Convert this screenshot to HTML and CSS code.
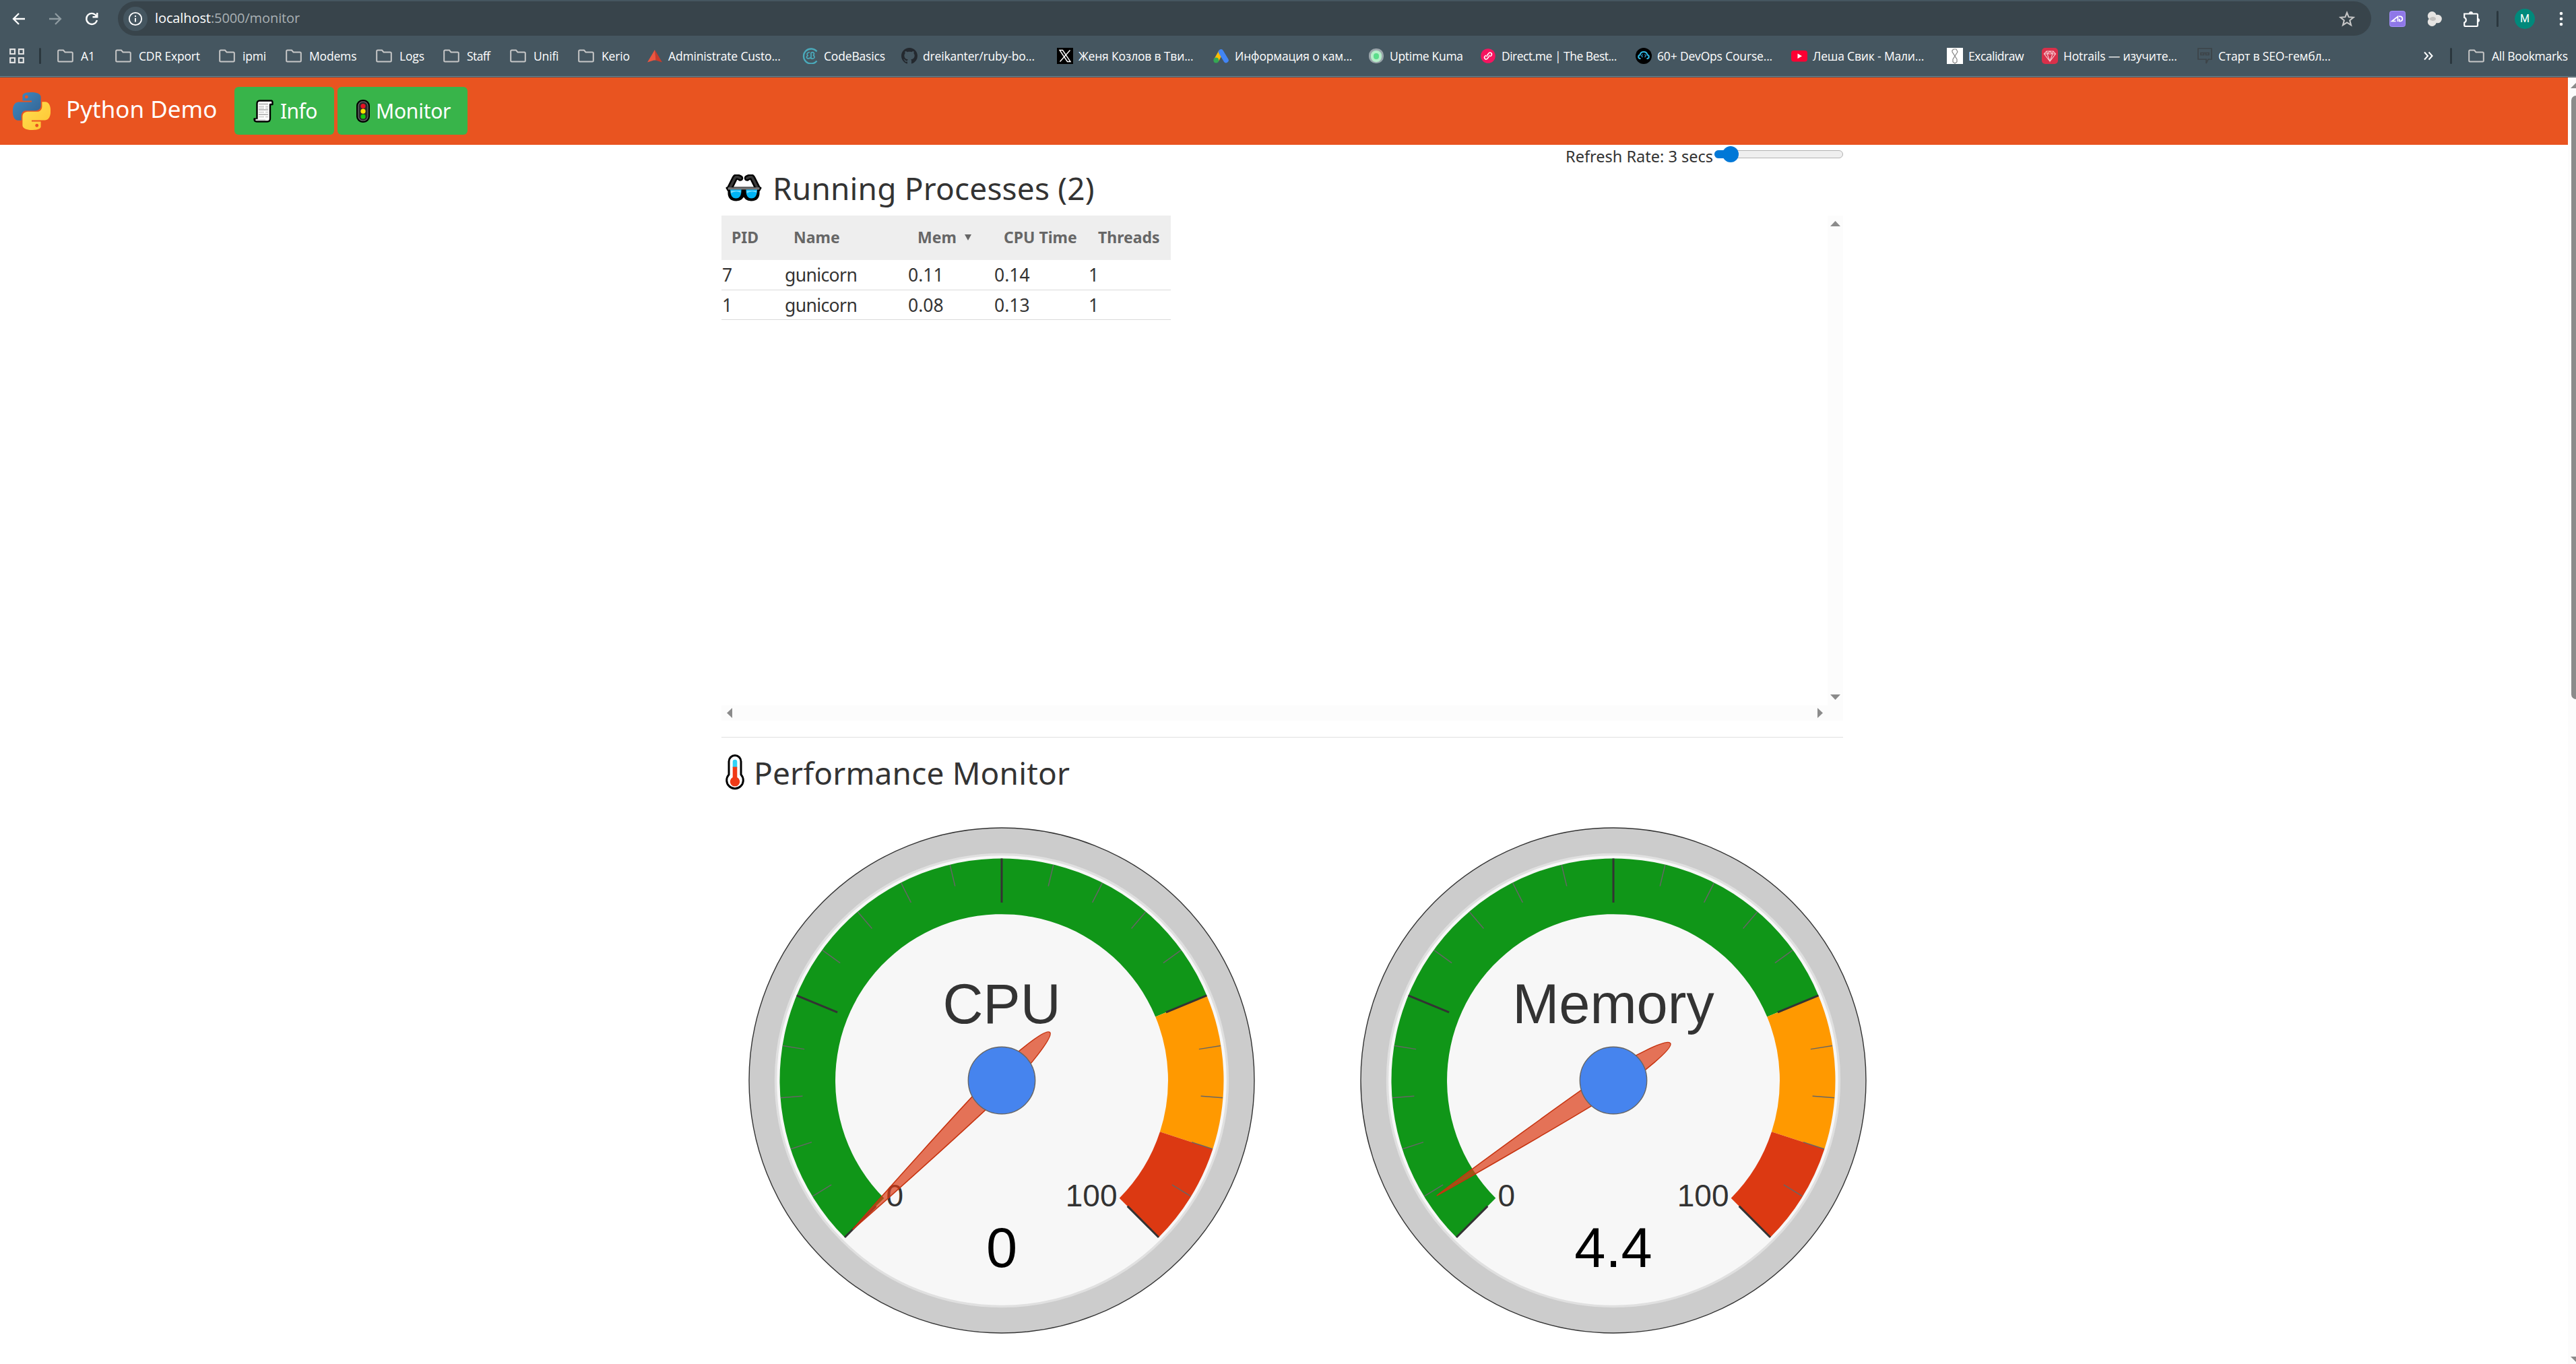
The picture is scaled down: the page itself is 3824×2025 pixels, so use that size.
FILE: index.html
```html
<!DOCTYPE html>
<html lang="en">
<head>
<meta charset="utf-8">
<title>Python Demo</title>
<link rel="stylesheet" href="styles.css">
</head>
<body>
<svg class="defs" aria-hidden="true">
  <defs>
    <symbol id="folder" viewBox="0 0 24 24"><path d="M1.2 5V19a1.5 1.5 0 0 0 1.5 1.5H21.3a1.5 1.5 0 0 0 1.5-1.5V8a1.5 1.5 0 0 0-1.5-1.5H11.5L9 3.5H2.7A1.5 1.5 0 0 0 1.2 5z" fill="none" stroke="#c7c7c7" stroke-width="2"/></symbol>
    <path id="py" d="M14.25.18l.9.2.73.26.59.3.45.32.34.34.25.34.16.33.1.3.04.26.02.2-.01.13V8.5l-.05.63-.13.55-.21.46-.26.38-.3.31-.33.25-.35.19-.35.14-.33.1-.3.07-.26.04-.21.02H8.77l-.69.05-.59.14-.5.22-.41.27-.33.32-.27.35-.2.36-.15.37-.1.35-.07.32-.04.27-.02.21v3.06H3.17l-.21-.03-.28-.07-.32-.12-.35-.18-.36-.26-.36-.36-.35-.46-.32-.59-.28-.73-.21-.88-.14-1.05-.05-1.23.06-1.22.16-1.04.24-.87.32-.71.36-.57.4-.44.42-.33.42-.24.4-.16.36-.1.32-.05.24-.01h.16l.06.01h8.16v-.83H6.18l-.01-2.75-.02-.37.05-.34.11-.31.17-.28.25-.26.31-.23.38-.2.44-.18.51-.15.58-.12.64-.1.71-.06.77-.04.84-.02 1.27.05zm-6.3 1.98l-.23.33-.08.41.08.41.23.34.33.22.41.09.41-.09.33-.22.23-.34.08-.41-.08-.41-.23-.33-.33-.22-.41-.09-.41.09z"/>
    <linearGradient id="blue" x1="0" y1="0" x2="1" y2="1"><stop offset="0" stop-color="#3f8cc6"/><stop offset="1" stop-color="#345f8c"/></linearGradient>
    <linearGradient id="yellow" x1="1" y1="1" x2="0" y2="0"><stop offset="0" stop-color="#ffe052"/><stop offset="1" stop-color="#ffc331"/></linearGradient>
    <g id="dial">
      <circle r="375" fill="#ccc" stroke="#333" stroke-width="1.4"/>
      <circle r="335.5" fill="#f7f7f7" stroke="#e0e0e0" stroke-width="3.4"/>
      <path fill="#109618" d="M-233 233A329.5 329.5 0 1 1 304.4-126.1L228.2-94.5A247 247 0 1 0-174.7 174.7z"/>
      <path fill="#ff9900" d="M304.4-126.1A329.5 329.5 0 0 1 313.4 101.8L234.9 76.3A247 247 0 0 0 228.2-94.5z"/>
      <path fill="#dc3912" d="M313.4 101.8A329.5 329.5 0 0 1 233 233L174.7 174.7A247 247 0 0 0 234.9 76.3z"/>
      <g stroke="#666" stroke-width="1.5">
        <path id="t4" d="M0 0M296.5 0H329" transform="rotate(148.5)"/>
        <path d="M296.5 0H329" transform="rotate(162)"/>
        <path d="M296.5 0H329" transform="rotate(175.5)"/>
        <path d="M296.5 0H329" transform="rotate(189)"/>
        <path d="M296.5 0H329" transform="rotate(216)"/>
        <path d="M296.5 0H329" transform="rotate(229.5)"/>
        <path d="M296.5 0H329" transform="rotate(243)"/>
        <path d="M296.5 0H329" transform="rotate(256.5)"/>
        <path d="M296.5 0H329" transform="rotate(283.5)"/>
        <path d="M296.5 0H329" transform="rotate(297)"/>
        <path d="M296.5 0H329" transform="rotate(310.5)"/>
        <path d="M296.5 0H329" transform="rotate(324)"/>
        <path d="M296.5 0H329" transform="rotate(351)"/>
        <path d="M296.5 0H329" transform="rotate(4.5)"/>
        <path d="M296.5 0H329" transform="rotate(18)"/>
        <path d="M296.5 0H329" transform="rotate(31.5)"/>
      </g>
      <g stroke="#333" stroke-width="3">
        <path d="M264 0H329.5" transform="rotate(135)"/>
        <path d="M264 0H329.5" transform="rotate(202.5)"/>
        <path d="M264 0H329.5" transform="rotate(270)"/>
        <path d="M264 0H329.5" transform="rotate(337.5)"/>
        <path d="M264 0H329.5" transform="rotate(45)"/>
      </g>
    </g>
    <path id="needle" d="M-313 0C-260-4-60-15 0-15C40-15 101-9 101 0C101 9 40 15 0 15C-60 15-260 4-313 0z" fill="#dc3912" fill-opacity=".7" stroke="#c63310" stroke-width="1.5"/>
    <circle id="hub" r="49.7" fill="#4684ee" stroke="#666" stroke-width="1.4"/>
  </defs>
</svg>

<header class="browser">
  <div class="toolbar">
    <svg class="ic back" viewBox="0 0 24 24"><path d="M21 12H4.500M12 4L4 12L12 20" fill="none" stroke="#fff" stroke-width="2.3"/></svg>
    <svg class="ic forward" viewBox="0 0 24 24"><path d="M3 12H19.500M12 4L20 12L12 20" fill="none" stroke="#8f9ba1" stroke-width="2.3"/></svg>
    <svg class="ic reload" viewBox="0 0 24 24"><path d="M19.500 8.500A8 8 0 1 0 20 14M20.300 3V9.300H13.500" fill="none" stroke="#fff" stroke-width="2.4"/></svg>
    <div class="address">
      <span class="info-dot"><svg viewBox="0 0 24 24"><circle cx="12" cy="12" r="10" fill="none" stroke="#fff" stroke-width="2"/><path d="M12 10.500V17M12 6.500V8.800" stroke="#fff" stroke-width="2.100"/></svg></span>
      <span class="url"><b>localhost</b>:5000/monitor</span>
      <svg class="ic star" viewBox="0 0 24 24"><path d="M12 2.800L14.600 9.300L21.600 9.800L16.200 14.300L18 21.200L12 17.400L6 21.200L7.800 14.300L2.400 9.800L9.400 9.300z" fill="none" stroke="#c7c7c7" stroke-width="2.100"/></svg>
    </div>
    <svg class="ic ad" viewBox="0 0 24 24"><rect x=".5" y=".5" width="23" height="23" rx="3" fill="#8f78e8" stroke="#a58fff"/><path d="M12.500 16V8.500L3.800 15.500H9.500M14 8.300H16.500A3.700 3.700 0 0 1 16.500 15.500H14.800V12" fill="none" stroke="#fff" stroke-width="1.700"/></svg>
    <svg class="ic blobs" viewBox="0 0 24 24"><g fill="#e6e4e2"><circle cx="8.300" cy="7.500" r="6.500"/><circle cx="8.300" cy="16.500" r="6.500"/><circle cx="16.500" cy="12" r="6.300"/></g><path d="M4 12a6.500 6.500 0 0 1 9-2q2 2 0 4a6.500 6.500 0 0 1-9-2z" fill="#c3c1bf"/></svg>
    <svg class="ic puzzle" viewBox="0 0 24 24"><path d="M1.200 4.500H19.500a1.500 1.500 0 0 1 1.500 1.500V21.500a1.500 1.500 0 0 1-1.500 1.500H2.700a1.500 1.500 0 0 1-1.500-1.500V17.500a4 4 0 0 0 0-7.500z" fill="none" stroke="#fff" stroke-width="2.200"/><path d="M8 4a3 3 0 0 1 6 0zM21 11a3 3 0 0 1 0 6z" fill="#fff"/></svg>
    <span class="bar-sep"></span>
    <span class="avatar">M</span>
    <svg class="ic kebab" viewBox="0 0 24 24"><g fill="#fff"><circle cx="12" cy="4" r="2.300"/><circle cx="12" cy="12" r="2.300"/><circle cx="12" cy="20" r="2.300"/></g></svg>
  </div>

  <nav class="bookmarks">
    <svg class="apps" viewBox="0 0 22 22"><path d="M1.200 1.200H8V8H1.200zM14 1.200H20.800V8H14zM1.200 14H8V20.800H1.200zM14 14H20.800V20.800H14z" fill="none" stroke="#e2e2e2" stroke-width="2.200"/></svg>
    <span class="bar-sep"></span>
    <a class="bm dir"><svg><use href="#folder"/></svg>A1</a>
    <a class="bm dir"><svg><use href="#folder"/></svg>CDR Export</a>
    <a class="bm dir"><svg><use href="#folder"/></svg>ipmi</a>
    <a class="bm dir"><svg><use href="#folder"/></svg>Modems</a>
    <a class="bm dir"><svg><use href="#folder"/></svg>Logs</a>
    <a class="bm dir snug"><svg><use href="#folder"/></svg>Staff</a>
    <a class="bm dir"><svg><use href="#folder"/></svg>Unifi</a>
    <a class="bm dir"><svg><use href="#folder"/></svg>Kerio</a>
    <a class="bm"><svg viewBox="0 0 24 24"><path d="M12 3L23 21.500L13.500 18.500z" fill="#c93a2b"/><path d="M12 3L1 21.500L10.500 18.500L13.500 18.500z" fill="#ee5640"/></svg>Administrate Custo...</a>
    <a class="bm"><svg viewBox="0 0 24 24"><path d="M21.500 5.500A11 11 0 1 0 21.500 19.500" fill="none" stroke="#4aaabb" stroke-width="2.400"/><path d="M11 6.500C6.500 7 6.500 10 8 11.500C4.500 14 7.500 17.500 11.500 15C17 18 20 14 16.500 11C19 8 16 5.500 13 7.500V15" fill="none" stroke="#4aaabb" stroke-width="1.700"/></svg>CodeBasics</a>
    <a class="bm"><svg viewBox="0 0 16 16"><path fill="#24292f" d="M8 0C3.580 0 0 3.580 0 8c0 3.540 2.290 6.530 5.470 7.590.4.070.55-.17.55-.38 0-.19-.01-.82-.01-1.490-2.010.37-2.530-.49-2.690-.94-.09-.23-.48-.94-.82-1.130-.28-.15-.68-.52-.01-.53.63-.01 1.080.58 1.230.82.72 1.210 1.870.87 2.330.66.07-.52.28-.87.51-1.070-1.780-.2-3.640-.89-3.640-3.950 0-.87.31-1.590.82-2.150-.08-.2-.36-1.020.08-2.120 0 0 .67-.21 2.200.82.64-.18 1.320-.27 2-.27s1.360.09 2 .27c1.530-1.040 2.200-.82 2.200-.82.44 1.100.16 1.920.08 2.120.51.56.82 1.270.82 2.150 0 3.070-1.870 3.750-3.650 3.950.29.25.54.73.54 1.480 0 1.070-.01 1.930-.01 2.200 0 .21.15.46.55.38A8 8 0 0 0 16 8c0-4.420-3.580-8-8-8z"/></svg>dreikanter/ruby-bo...</a>
    <a class="bm"><svg viewBox="0 0 24 24"><path fill="#000" d="M0 0H24V24H0z"/><path d="M4 3.500H8.500L20 20.500H15.500zM19.500 3.500L4.500 20.500" fill="none" stroke="#fff" stroke-width="1.400"/></svg>Женя Козлов в Тви...</a>
    <a class="bm"><svg viewBox="0 0 24 24"><path d="M11.500 6L4.500 18.500" stroke="#fbbc04" stroke-width="7.500"/><path d="M11.500 6L19 18.500" stroke="#4285f4" stroke-width="7.500" stroke-linecap="round"/><circle cx="4.300" cy="18.500" r="3.900" fill="#34a853"/></svg>Информация о кам...</a>
    <a class="bm tight"><svg viewBox="0 0 24 24"><rect x="1" y="1" width="22" height="22" rx="10" fill="#9aa5aa"/><rect x="4" y="4" width="16" height="17" rx="7.500" fill="#b6efc9"/><rect x="8" y="8" width="8" height="9" rx="4" fill="#5cdd8b"/></svg>Uptime Kuma</a>
    <a class="bm tighter"><svg viewBox="0 0 24 24"><circle cx="12" cy="12" r="10.800" fill="#f5145f"/><path d="M11 13.500L14 9.500A2.300 2.300 0 0 1 17.500 12L14.500 15.500M13.500 10.500L10.500 14.500M13 11L10 8.500" fill="none" stroke="#fff" stroke-width="0"/><path d="M10.500 13.500A2.500 2.500 0 0 1 10.800 10.800L13.200 7.800A2.500 2.500 0 0 1 17 11L15.300 13M13.500 10.500A2.500 2.500 0 0 1 13.200 13.200L10.800 16.200A2.500 2.500 0 0 1 7 13L8.700 11" fill="none" stroke="#fff" stroke-width="1.600"/></svg>Direct.me | The Best...</a>
    <a class="bm"><svg viewBox="0 0 24 24"><circle cx="12" cy="12" r="12" fill="#000"/><path d="M7.500 16H6.500A2.800 2.800 0 0 1 6.500 10.500A5.600 5.600 0 0 1 17.500 10.500A2.800 2.800 0 0 1 17.500 16H16.500" fill="none" stroke="#2fb6e0" stroke-width="2.100"/><path d="M10.500 9.500L8.700 11.700L10.500 14M13.500 9.500L15.300 11.700L13.500 14" fill="none" stroke="#2a8fc0" stroke-width="1.300"/></svg>60+ DevOps Course...</a>
    <a class="bm"><svg viewBox="0 0 24 24"><rect y="4" width="24" height="16.500" rx="4" fill="#ff0033"/><path d="M9.500 8.500V16L16 12.250z" fill="#fff"/></svg>Леша Свик - Мали...</a>
    <a class="bm tighter"><svg viewBox="0 0 24 24"><path fill="#fff" d="M0 0H24V24H0z"/><path d="M8 4L10 2H14L16 6L9 17V21L12 23L15 21V17L8 6z" fill="none" stroke="#888" stroke-width="1.200"/></svg>Excalidraw</a>
    <a class="bm"><svg viewBox="0 0 24 24"><rect width="24" height="24" rx="5" fill="#d9304a"/><path d="M3.500 9L7 5H17L20.500 9L12 20zM3.500 9H20.500M8 9L12 20L16 9M7 5L8.500 9L12 5L15.500 9L17 5" fill="none" stroke="#f5c3cb" stroke-width="1.200"/></svg>Hotrails — изучите...</a>
    <a class="bm"><svg viewBox="0 0 24 24"><path d="M2 1H22V17H17L14 23V17H2zM5 7.500H19M6 8V10.500H10.500V8M13.500 8V10.500H18V8" fill="none" stroke="#3d4448" stroke-width="1.700"/></svg>Старт в SEO-гембл...</a>
    <svg class="more" viewBox="0 0 16 14"><path d="M2 1.500L7 7L2 12.500M8.500 1.500L13.500 7L8.500 12.500" fill="none" stroke="#fff" stroke-width="2"/></svg>
    <span class="bar-sep"></span>
    <a class="bm dir tight"><svg><use href="#folder"/></svg>All Bookmarks</a>
  </nav>
</header>

<div class="viewport">
  <div class="page">
    <nav class="navbar">
      <svg class="logo" viewBox="0 0 24 24"><use href="#py" fill="url(#blue)"/><use href="#py" fill="url(#yellow)" transform="rotate(180 12 12)"/></svg>
      <span class="brand">Python Demo</span>
      <a class="btn info"><svg class="scroll" viewBox="0 0 30 34"><path d="M5.500 26V6C5.500 3 7 1.500 9.500 1.500H26.500C28 1.500 28.500 2.500 28.500 4V7H25V28C25 31 23.500 32.500 21 32.500H5C2.500 32.500 1.500 31 1.500 28.500H5.500z" fill="#fff" stroke="#000" stroke-width="2.400" stroke-linejoin="round"/><path d="M3 28.800H18V31H5z" fill="#ddd"/><path d="M8 6.500H22M8 15H22M8 22H22" stroke="#a5a5a5" stroke-width="1.500"/><path d="M8 10H16M18 10H22M8 12.500H16M18 12.500H22M8 18.500H16M18 18.500H22M8 25.500H16M18 25.500H22" stroke="#c9c9c9" stroke-width="1.400"/></svg>Info</a>
      <a class="btn monitor"><svg class="light" viewBox="0 0 20 34"><rect x="1" y="1" width="18" height="32" rx="8" fill="#2b2b2b" stroke="#000" stroke-width="2"/><rect x="3" y="3" width="14" height="28" rx="6.500" fill="none" stroke="#777" stroke-width="1"/><circle cx="10" cy="9.500" r="3.600" fill="#e81123"/><circle cx="10" cy="17.200" r="3.600" fill="#fce100"/><circle cx="10" cy="25" r="3.600" fill="#16c60c"/></svg>Monitor</a>
    </nav>

    <main>
      <div class="refresh"><label>Refresh Rate: 3 secs</label><div class="slider"><i class="fill"></i><i class="thumb"></i></div></div>

      <h2 class="processes"><svg class="glasses" viewBox="0 0 54 40"><path d="M6 21L14 5Q16 2 22 5.500M48 21L40 5Q38 2 32 5.500" fill="none" stroke="#000" stroke-width="8.500" stroke-linecap="round" stroke-linejoin="round"/><path d="M2 20H52L49 25Q50 38 38 38Q29 38 27 29Q25 38 16 38Q4 38 5 25z" fill="#000" stroke="#000" stroke-width="3" stroke-linejoin="round"/><path d="M6 21L14 5Q16 2 22 5.500M48 21L40 5Q38 2 32 5.500" fill="none" stroke="#383838" stroke-width="3.600" stroke-linecap="round"/><path d="M7 22H23.500Q24 35.500 15.500 35.500Q7 35.500 7 22zM30.500 22H47Q47 35.500 38.500 35.500Q30 35.500 30.500 22z" fill="#00b4f5"/><path d="M8 24H22.500V27Q15 23 8 28zM31.500 24H46V27Q39 23 31.500 28z" fill="#6fd9ff"/><path d="M3.500 20.800H50.500" stroke="#767676" stroke-width="3.200"/></svg>Running Processes (2)</h2>

      <div class="proc-box">
        <div class="proc-body">
          <table>
            <colgroup><col class="c1"><col class="c2"><col class="c3"><col class="c4"><col class="c5"></colgroup>
            <thead><tr><th>PID</th><th>Name</th><th>Mem<svg class="sort" viewBox="0 0 10 9"><path d="M0 0H10L5 9z" fill="#666"/></svg></th><th>CPU Time</th><th>Threads</th></tr></thead>
            <tbody>
              <tr><td>7</td><td>gunicorn</td><td>0.11</td><td>0.14</td><td>1</td></tr>
              <tr><td>1</td><td>gunicorn</td><td>0.08</td><td>0.13</td><td>1</td></tr>
            </tbody>
          </table>
        </div>
        <div class="vbar"><svg class="av" viewBox="0 0 15 8"><path d="M7.500 0L15 8H0z"/></svg><svg class="av" viewBox="0 0 15 8"><path d="M0 0H15L7.500 8z"/></svg></div>
        <div class="hbar"><svg class="ah" viewBox="0 0 8 15"><path d="M8 0V15L0 7.500z"/></svg><svg class="ah" viewBox="0 0 8 15"><path d="M0 0L8 7.500L0 15z"/></svg></div>
      </div>

      <hr>

      <h2 class="performance"><svg class="thermo" viewBox="0 0 28 54"><path d="M14 1.500A9 9 0 0 0 5 10.500V30A12.300 12.300 0 1 0 23 30V10.500A9 9 0 0 0 14 1.500z" fill="#fff" stroke="#000" stroke-width="3"/><path d="M10.700 11A3.300 3.300 0 0 1 17.300 11V20H10.700z" fill="#31d2f7"/><path d="M10.700 18.500H17.300V34A7.200 7.200 0 1 1 10.700 34z" fill="#f03a17"/></svg>Performance Monitor</h2>

      <div class="gauges">
        <svg class="gauge" viewBox="-417 -417 834 834">
          <use href="#dial"/>
          <text class="name" y="-85">CPU</text><text class="lim" x="-171.500" y="187">0</text><text class="lim max" x="171.500" y="187">100</text><text class="value" y="277">0</text>
          <use href="#needle" transform="rotate(-45)"/><use href="#hub"/>
        </svg>
        <svg class="gauge" viewBox="-417 -417 834 834">
          <use href="#dial"/>
          <text class="name" y="-85">Memory</text><text class="lim" x="-171.500" y="187">0</text><text class="lim max" x="171.500" y="187">100</text><text class="value" y="277">4.4</text>
          <use href="#needle" transform="rotate(-33.12)"/><use href="#hub"/>
        </svg>
      </div>
    </main>
  </div>

  <div class="page-scroll">
    <svg viewBox="0 0 12 8"><path d="M4 8L12 0V8z"/></svg>
    <i></i>
    <svg class="down" viewBox="0 0 12 8"><path d="M4 0H12V8z"/></svg>
  </div>
</div>
</body>
</html>
```
FILE: styles.css
```css
* { box-sizing: border-box; }
body { margin: 0; height: 2025px; overflow: hidden; background: #fff; color: #333; font-family: "Noto Sans", sans-serif; display: flex; flex-direction: column; }
svg { display: block; flex: none; }
.defs { position: absolute; width: 0; height: 0; }

/* browser chrome */
.browser { height: 115px; flex: none; background: #455660; color: #fff; font: 17.5px "Open Sans", sans-serif; letter-spacing: -.17px; background-image: linear-gradient(#74838b, #74838b); background-size: 100% 1px; background-position: 0 113px; background-repeat: no-repeat; }
.toolbar { height: 56px; display: flex; align-items: center; padding-left: 16px; }
.ic { width: 24px; height: 24px; }
.forward, .reload { margin-left: 30px; }
.address { width: 3345px; height: 51px; margin: -1px 0 0 27px; border-radius: 26px; background: #38444b; display: flex; align-items: center; padding: 0 24px 0 8px; }
.info-dot { width: 36px; height: 36px; border-radius: 50%; background: #455660; display: flex; align-items: center; justify-content: center; }
.info-dot svg { width: 22px; height: 22px; }
.url { margin-left: 11px; font-size: 20px; letter-spacing: -.1px; color: #a9b0b4; line-height: 26px; margin-top: -1px; }
.url b { font-weight: 400; color: #fff; }
.star { margin-left: auto; }
.ad { margin-left: 27px; }
.blobs, .puzzle { margin-left: 31px; }
.bar-sep { width: 3px; height: 24px; border-radius: 1.5px; background: #2b373e; }
.toolbar .bar-sep { margin-left: 25px; }
.avatar { width: 30px; height: 30px; margin-left: 24px; border-radius: 50%; background: #00897b; font: 16px/30px Roboto, sans-serif; text-align: center; }
.kebab { margin-left: 27px; }
.bookmarks { height: 54px; padding-left: 14px; display: grid; align-items: center; grid-template-columns: 44px 27px 86px 154px 99px 134px 100px 99px 101px 102px 231px 147px 231px 232px 230px 166px 231px 231px 231px 141px 230px 336px 40px 27px 150px; }
.apps { width: 22px; height: 22px; }
.bm { display: flex; align-items: center; gap: 8px; white-space: nowrap; }
.bm svg { width: 24px; height: 24px; }
.dir { gap: 11px; }
.snug { letter-spacing: -.6px; }
.tight { letter-spacing: -.3px; }
.tighter { letter-spacing: -.5px; }
.more { width: 16px; height: 14px; }

/* page */
.viewport { flex: 1; display: flex; min-height: 0; }
.page { width: 3812px; }
.navbar { height: 100px; background: #e95420; color: #fff; display: flex; align-items: flex-start; padding: 14px 0 0 19px; }
.logo { width: 56px; height: 56px; margin-top: 8px; }
.brand { width: 249px; margin-left: 23px; margin-right: 1px; padding-top: 9px; font-size: 35px; line-height: 48px; }
.btn { height: 71px; border-radius: 6px; background: #38b44a; font-size: 30px; line-height: 40px; display: flex; align-items: center; padding-left: 28px; }
.info { width: 148px; letter-spacing: -.6px; }
.monitor { width: 193px; margin-left: 5px; letter-spacing: -.25px; }
.scroll { width: 30px; height: 34px; margin-right: 10px; }
.light { width: 20px; height: 34px; margin-right: 9px; }

main { width: 1665px; margin-left: 1071px; }
.refresh { height: 34px; display: flex; justify-content: flex-end; font-size: 23.5px; line-height: 34px; }
.slider { width: 191px; height: 12px; margin: 8px 0 0 2px; border: 1px solid #b2b2b2; border-radius: 6px; background: #efefef; position: relative; }
.fill { position: absolute; left: -1px; top: -1px; width: 24px; height: 12px; border-radius: 6px; background: #0078d7; }
.thumb { position: absolute; left: 11px; top: -7px; width: 24px; height: 24px; border-radius: 50%; background: #0078d7; }
h2 { margin: 0; font-size: 46px; font-weight: 400; letter-spacing: .17px; line-height: 60px; display: flex; align-items: center; padding-left: 6px; }
.processes { height: 60px; margin-bottom: 11px; }
.glasses { width: 54px; height: 40px; margin-right: 16px; }
.performance { height: 60px; margin: 22px 0 10px; }
.thermo { width: 28px; height: 54px; margin-right: 14px; }

.proc-box { height: 750px; display: grid; grid-template: 727px 23px / 1642px 23px; }
.vbar, .hbar { background: #fcfcfc; display: flex; justify-content: space-between; fill: #8b8b8b; }
.vbar { flex-direction: column; align-items: center; padding: 8px 0; }
.hbar { grid-column: 1 / 3; align-items: center; padding: 0 30px 0 8px; }
.av { width: 15px; height: 8px; }
.ah { width: 8px; height: 15px; }

table { width: 667px; table-layout: fixed; border-spacing: 0; }
.c1 { width: 92px; } .c2 { width: 184px; } .c3 { width: 128px; } .c4 { width: 140px; } .c5 { width: 123px; }
th { height: 66px; padding: 0 0 2px 15px; background: #eee; color: #666; font-size: 23px; text-align: left; white-space: nowrap; line-height: 32px; }
.sort { display: inline-block; width: 10px; height: 9px; margin-left: 12px; vertical-align: 4px; }
td { height: 44px; padding: 0 0 0 1px; border-bottom: 1px solid #dadada; font-size: 26.5px; line-height: 36px; }
tr:first-child td { height: 45px; }
td:nth-child(2) { letter-spacing: -.6px; padding-left: 2px; }

hr { height: 1px; margin: 24px 0 0; border: 0; background: #e0e0e0; }

.gauges { display: flex; gap: 74px; margin-left: -1px; }
.gauge { width: 834px; height: 834px; font-family: "Liberation Sans", Arial, sans-serif; }
.name, .value { font-size: 83px; text-anchor: middle; fill: #333; }
.value { fill: #000; }
.lim { font-size: 46px; fill: #333; }
.max { text-anchor: end; }

.page-scroll { width: 12px; background: #fcfcfc; fill: #8b8b8b; padding-top: 8px; display: flex; flex-direction: column; }
.page-scroll svg { width: 12px; height: 8px; }
.page-scroll i { height: 896px; margin: 11px 0 0 5px; border-radius: 7px 0 0 7px; background: #8b8b8b; }
.page-scroll .down { margin: auto 0 3px; }
```
